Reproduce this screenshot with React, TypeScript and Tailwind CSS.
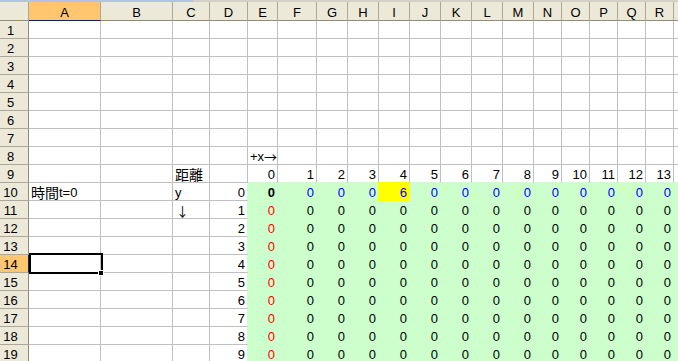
import React from 'react';

type Cell = {
  text?: React.ReactNode;
  align?: 'left' | 'right';
  color?: string;
  bold?: boolean;
  fill?: string;
};

const COLS = [
  { k: 'A', w: 'w-[72px]' },
  { k: 'B', w: 'w-[72px]' },
  { k: 'C', w: 'w-[37px]' },
  { k: 'D', w: 'w-[38px]' },
  { k: 'E', w: 'w-[30px]' },
  { k: 'F', w: 'w-[39px]' },
  { k: 'G', w: 'w-[31px]' },
  { k: 'H', w: 'w-[31px]' },
  { k: 'I', w: 'w-[31px]' },
  { k: 'J', w: 'w-[31px]' },
  { k: 'K', w: 'w-[31px]' },
  { k: 'L', w: 'w-[31px]' },
  { k: 'M', w: 'w-[31px]' },
  { k: 'N', w: 'w-[28px]' },
  { k: 'O', w: 'w-[28px]' },
  { k: 'P', w: 'w-[28px]' },
  { k: 'Q', w: 'w-[28px]' },
  { k: 'R', w: 'w-[28px]' },
  { k: 'S', w: 'w-[64px]' },
];

const ROWS = Array.from({ length: 19 }, (_, i) => i + 1);

const cjk = "font-['Noto_Sans_CJK_JP',sans-serif]";

function cellAt(row: number, ci: number): Cell {
  const green = row >= 10 && ci >= 4;
  const fill = row === 10 && ci === 8 ? 'yellow' : green ? 'green' : undefined;

  if (row === 8 && ci === 4)
    return { text: <>+x<span className={cjk}>→</span></>, align: 'left' };
  if (row === 9 && ci === 2)
    return { text: <span className={`${cjk} text-[14px]`}>距離</span>, align: 'left' };
  if (row === 9 && ci >= 4 && ci <= 17) return { text: String(ci - 4), align: 'right' };
  if (row === 10 && ci === 0)
    return { text: <><span className={`${cjk} text-[14px]`}>時間</span>t=0</>, align: 'left' };
  if (row === 10 && ci === 2) return { text: 'y', align: 'left' };
  if (row === 11 && ci === 2)
    return { text: <span className={`${cjk} pl-[1px]`}>↓</span>, align: 'left' };
  if (row >= 10 && ci === 3) return { text: String(row - 10), align: 'right' };

  if (row === 10 && ci >= 4 && ci <= 17) {
    if (ci === 4) return { text: '0', align: 'right', bold: true, fill };
    if (ci === 8) return { text: '6', align: 'right', color: 'blue', fill };
    return { text: '0', align: 'right', color: 'blue', fill };
  }
  if (row >= 11 && ci >= 4 && ci <= 17) {
    return { text: '0', align: 'right', color: ci === 4 ? 'red' : undefined, fill };
  }
  return { fill };
}

function borderFor(row: number, ci: number, fill?: string) {
  // Excel paints a fill over the gridlines round the cell
  let r = 'border-r-[#c0c0c0]';
  let b = 'border-b-[#c0c0c0]';
  if (fill === 'green') {
    r = 'border-r-[#ccffcc]';
    b = 'border-b-[#ccffcc]';
  }
  if (fill === 'yellow') {
    r = 'border-r-[#ffff00]';
    b = 'border-b-[#ffff00]';
  }
  if (row >= 10 && ci === 3) r = 'border-r-[#ccffcc]';
  if (row === 10 && ci === 7) r = 'border-r-[#ffff00]';
  if (row === 9 && ci >= 4) b = ci === 8 ? 'border-b-[#ffff00]' : 'border-b-[#ccffcc]';
  return `${r} ${b}`;
}

export default function App() {
  return (
    <div className="w-[678px] h-[361px] overflow-hidden bg-white relative font-['Liberation_Sans','Noto_Sans_CJK_JP',sans-serif] text-[13px] text-black">
      {/* strip above the headers */}
      <div className="flex h-[2px]">
        <div className="w-[193px] shrink-0 bg-[#b2c3e6]" />
        <div className="flex-1 bg-[#d4d0c8]" />
      </div>

      {/* column headers */}
      <div className="flex h-[19px] w-max">
        <div className="w-[29px] shrink-0 bg-[#ece9d8] border-r border-b border-r-[#aca899] border-b-[#8f8c7c]" />
        {COLS.map((c) => (
          <div
            key={c.k}
            className={`${c.w} shrink-0 flex items-end justify-center leading-[15px] border-r border-b ${
              c.k === 'A'
                ? 'bg-[#ffc56f] border-r-[#aca899] border-b-[#0a246a]'
                : 'bg-[#ece9d8] border-r-[#aca899] border-b-[#8f8c7c]'
            }`}
          >
            {c.k === 'S' ? '' : c.k}
          </div>
        ))}
      </div>

      {/* grid */}
      {ROWS.map((r) => (
        <div key={r} className="flex h-[18px] w-max">
          <div
            className={`w-[29px] shrink-0 flex items-end justify-center pr-[7px] leading-[15px] border-r border-b ${
              r === 14
                ? 'bg-[#ffc56f] border-r-[#0a246a] border-b-[#aca899]'
                : 'bg-[#ece9d8] border-r-[#8f8c7c] border-b-[#aca899]'
            }`}
          >
            {r}
          </div>
          {COLS.map((c, ci) => {
            const cell = cellAt(r, ci);
            const bg =
              cell.fill === 'yellow' ? 'bg-[#ffff00]' : cell.fill === 'green' ? 'bg-[#ccffcc]' : 'bg-white';
            const color =
              cell.color === 'red' ? 'text-[#ff0000]' : cell.color === 'blue' ? 'text-[#0000ff]' : 'text-black';
            return (
              <div
                key={c.k}
                className={`${c.w} shrink-0 relative flex items-end leading-[15px] whitespace-nowrap border-r border-b ${borderFor(
                  r,
                  ci,
                  cell.fill,
                )} ${bg} ${color} ${cell.bold ? 'font-bold' : ''} ${
                  cell.align === 'right' ? 'justify-end pr-[2px]' : 'justify-start pl-[2px]'
                } ${cell.align === 'left' ? 'overflow-visible z-10' : ''}`}
              >
                {cell.text}
              </div>
            );
          })}
        </div>
      ))}

      {/* active cell A14 */}
      <div className="absolute left-[29px] top-[253px] w-[74px] h-[21px] border-2 border-black z-20" />
      <div className="absolute left-[98px] top-[270px] w-[6px] h-[6px] bg-black border border-white z-30" />
    </div>
  );
}
